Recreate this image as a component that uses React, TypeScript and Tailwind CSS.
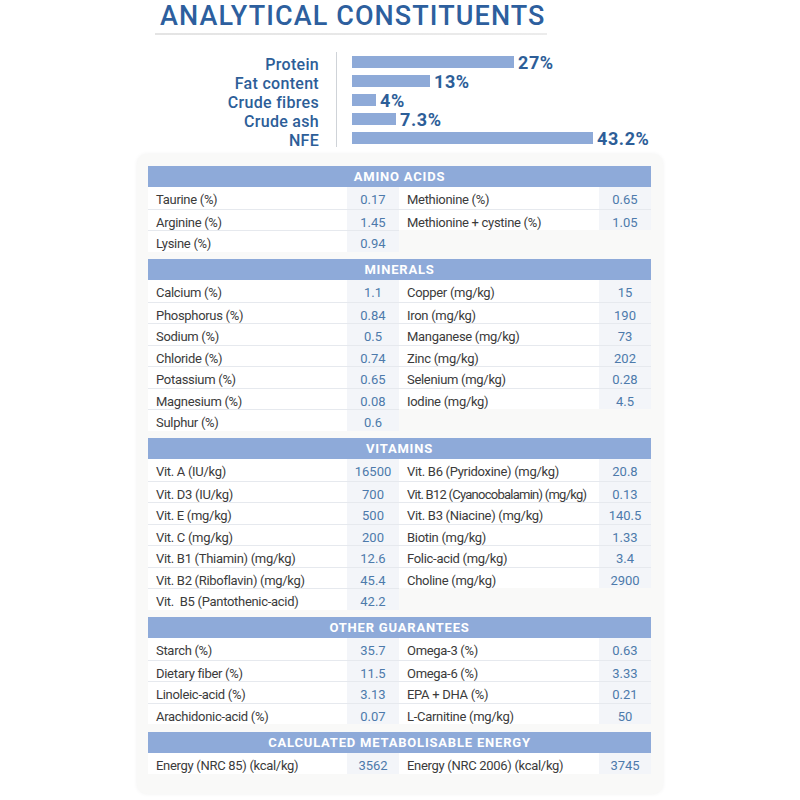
import React from "react";

type Row = [string, string];
type Section = { title: string; left: Row[]; right: Row[] };

const sections: Section[] = [
  {
    title: "AMINO ACIDS",
    left: [
      ["Taurine (%)", "0.17"],
      ["Arginine (%)", "1.45"],
      ["Lysine (%)", "0.94"],
    ],
    right: [
      ["Methionine (%)", "0.65"],
      ["Methionine + cystine (%)", "1.05"],
    ],
  },
  {
    title: "MINERALS",
    left: [
      ["Calcium (%)", "1.1"],
      ["Phosphorus (%)", "0.84"],
      ["Sodium (%)", "0.5"],
      ["Chloride (%)", "0.74"],
      ["Potassium (%)", "0.65"],
      ["Magnesium (%)", "0.08"],
      ["Sulphur (%)", "0.6"],
    ],
    right: [
      ["Copper (mg/kg)", "15"],
      ["Iron (mg/kg)", "190"],
      ["Manganese (mg/kg)", "73"],
      ["Zinc (mg/kg)", "202"],
      ["Selenium (mg/kg)", "0.28"],
      ["Iodine (mg/kg)", "4.5"],
    ],
  },
  {
    title: "VITAMINS",
    left: [
      ["Vit. A (IU/kg)", "16500"],
      ["Vit. D3 (IU/kg)", "700"],
      ["Vit. E (mg/kg)", "500"],
      ["Vit. C (mg/kg)", "200"],
      ["Vit. B1 (Thiamin) (mg/kg)", "12.6"],
      ["Vit. B2 (Riboflavin) (mg/kg)", "45.4"],
      ["Vit.  B5 (Pantothenic-acid)", "42.2"],
    ],
    right: [
      ["Vit. B6 (Pyridoxine) (mg/kg)", "20.8"],
      ["Vit. B12 (Cyanocobalamin) (mg/kg)", "0.13"],
      ["Vit. B3 (Niacine) (mg/kg)", "140.5"],
      ["Biotin (mg/kg)", "1.33"],
      ["Folic-acid (mg/kg)", "3.4"],
      ["Choline (mg/kg)", "2900"],
    ],
  },
  {
    title: "OTHER GUARANTEES",
    left: [
      ["Starch (%)", "35.7"],
      ["Dietary fiber (%)", "11.5"],
      ["Linoleic-acid (%)", "3.13"],
      ["Arachidonic-acid (%)", "0.07"],
    ],
    right: [
      ["Omega-3 (%)", "0.63"],
      ["Omega-6 (%)", "3.33"],
      ["EPA + DHA (%)", "0.21"],
      ["L-Carnitine (mg/kg)", "50"],
    ],
  },
  {
    title: "CALCULATED METABOLISABLE ENERGY",
    left: [["Energy (NRC 85) (kcal/kg)", "3562"]],
    right: [["Energy (NRC 2006) (kcal/kg)", "3745"]],
  },
];

const bars: { label: string; value: string; w: number }[] = [
  { label: "Protein", value: "27%", w: 162 },
  { label: "Fat content", value: "13%", w: 78 },
  { label: "Crude fibres", value: "4%", w: 24 },
  { label: "Crude ash", value: "7.3%", w: 44 },
  { label: "NFE", value: "43.2%", w: 241 },
];

function Column({ rows, labelW, valueW }: { rows: Row[]; labelW: string; valueW: string }) {
  return (
    <div className="flex flex-col">
      {rows.map(([label, value], i) => {
        const long = label.length > 30;
        return (
          <div
            key={label}
            className={
              "flex h-[21.5px] " + (i > 0 ? "border-t border-[#e6e9ee]" : "")
            }
          >
            <div
              className={
                labelW +
                " bg-white pl-[8px] pt-[4px] leading-[17px] text-[13px] text-[#3b3b3b] whitespace-pre overflow-hidden " +
                (long ? "tracking-[-0.75px]" : "tracking-[-0.3px]")
              }
            >
              {label}
            </div>
            <div
              className={
                valueW +
                " bg-[#f3f5f9] pt-[4px] leading-[17px] text-center text-[13px] text-[#4d7aab]"
              }
            >
              {value}
            </div>
          </div>
        );
      })}
    </div>
  );
}

export default function App() {
  return (
    <div
      className="w-[800px] h-[800px] bg-white overflow-hidden"
      style={{ fontFamily: "Roboto, 'Liberation Sans', sans-serif" }}
    >
      <div className="w-[526px] mx-auto flex flex-col">
        {/* Title */}
        <div className="pl-[23px] text-[27px] leading-[32px] font-medium text-[#2d5f9e] tracking-[1.1px]">
          ANALYTICAL CONSTITUENTS
        </div>
        <div className="ml-[18px] w-[392px] h-[2px] mt-[1px] bg-gradient-to-r from-[#e4e4e4] to-[#ececec]" />

        {/* Bar chart */}
        <div className="mt-[17px] h-[102px] flex items-start">
          <div className="w-[182px] pt-[3px] flex flex-col items-end">
            {bars.map((b) => (
              <div
                key={b.label}
                className="h-[19px] leading-[19px] text-[16px] font-medium tracking-[0.3px] text-[#2d5e98] whitespace-nowrap"
              >
                {b.label}
              </div>
            ))}
          </div>
          <div className="ml-[17px] w-px h-[95px] bg-[#cfd3d8]" />
          <div className="ml-[15px] pt-[3px] flex flex-col">
            {bars.map((b) => (
              <div key={b.label} className="h-[19px] flex items-start">
                <div
                  className="h-[12px] mt-[1px] bg-[#8eaad8]"
                  style={{ width: b.w }}
                />
                <div className="ml-[4px] text-[18px] leading-[16px] font-bold tracking-[0.6px] text-[#2d5e98]">
                  {b.value}
                </div>
              </div>
            ))}
          </div>
        </div>

        {/* Card */}
        <div className="rounded-[10px] bg-[#f9f9f8] shadow-[0_0_4px_rgba(0,0,0,0.06)] pl-[11px] pr-[12px] pt-[12px] pb-[20px] flex flex-col">
          {sections.map((s, idx) => (
            <div key={s.title} className={idx > 0 ? "mt-[7.5px]" : ""}>
              <div className="h-[21px] bg-[#8eaad9] text-white text-center text-[13px] leading-[22px] font-bold tracking-[0.8px]">
                {s.title}
              </div>
              <div className="flex">
                <Column rows={s.left} labelW="w-[199px]" valueW="w-[52px]" />
                <Column rows={s.right} labelW="w-[200px]" valueW="w-[52px]" />
              </div>
            </div>
          ))}
        </div>
      </div>
    </div>
  );
}
